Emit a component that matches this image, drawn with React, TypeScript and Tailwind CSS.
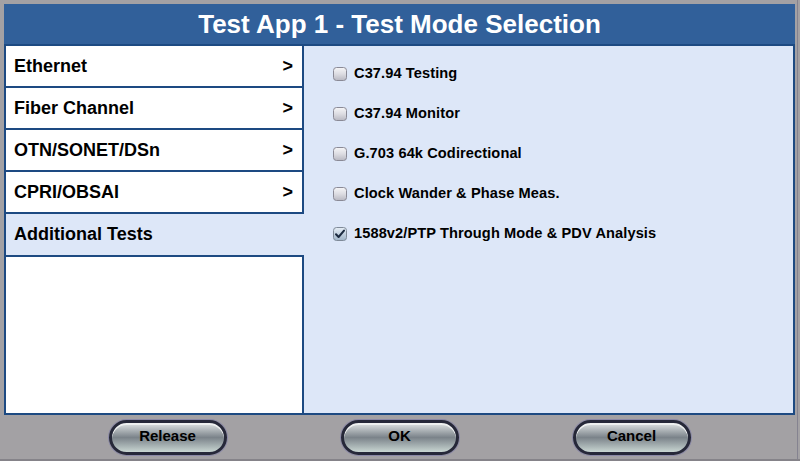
import * as React from 'react'

const categories = ['Ethernet', 'Fiber Channel', 'OTN/SONET/DSn', 'CPRI/OBSAI']

const tests = [
  { label: 'C37.94 Testing', checked: false },
  { label: 'C37.94 Monitor', checked: false },
  { label: 'G.703 64k Codirectional', checked: false },
  { label: 'Clock Wander & Phase Meas.', checked: false },
  { label: '1588v2/PTP Through Mode & PDV Analysis', checked: true },
]

function CheckBox({ checked }: { checked: boolean }) {
  if (checked) {
    return (
      <svg width="14" height="14" viewBox="0 0 14 14" className="shrink-0">
        <defs>
          <linearGradient id="cbOn" x1="0" y1="0" x2="0" y2="1">
            <stop offset="0" stopColor="#e6eef6" />
            <stop offset="1" stopColor="#9fb4c8" />
          </linearGradient>
        </defs>
        <rect x="0.5" y="0.5" width="13" height="13" rx="3" fill="url(#cbOn)" stroke="#7f8a98" />
        <path d="M3 7.2 L5.6 10 L11 3.6" fill="none" stroke="#1b2a40" strokeWidth="2" strokeLinecap="round" strokeLinejoin="round" />
      </svg>
    )
  }
  return (
    <svg width="14" height="14" viewBox="0 0 14 14" className="shrink-0">
      <defs>
        <linearGradient id="cbOff" x1="0" y1="0" x2="0" y2="1">
          <stop offset="0" stopColor="#f6f6f8" />
          <stop offset="0.5" stopColor="#dcdce2" />
          <stop offset="1" stopColor="#b8b8c2" />
        </linearGradient>
      </defs>
      <rect x="0.5" y="0.5" width="13" height="13" rx="3" fill="url(#cbOff)" stroke="#8a8a96" />
    </svg>
  )
}

function PillButton({ label }: { label: string }) {
  return (
    <button className="h-[35px] w-[118px] rounded-full border-[3px] border-[#262839] bg-gradient-to-b from-[#e2e6e6] via-[#7b838a] to-[#c9d6d2] pb-[1px] text-[15px] font-bold text-black shadow-[0_0_0_1px_#8a88a6,inset_0_2px_0_#eef0f0]">
      {label}
    </button>
  )
}

export default function App() {
  return (
    <div
      className="flex h-[461px] w-[800px] flex-col bg-[#a3a1a4]"
      style={{ fontFamily: '"Liberation Sans", Arial, sans-serif' }}
    >
      <div className="flex flex-1">
        <div className="flex flex-1 flex-col pl-1 pt-1">
          <div className="flex h-[40px] items-center justify-center bg-[#31609a] text-[26px] font-bold text-white">
            Test App 1 - Test Mode Selection
          </div>
          <div className="flex h-[371px] border-2 border-[#1d4a82] bg-[#dde7f8]">
            <div className="flex w-[298px] flex-col">
              {categories.map((c) => (
                <div
                  key={c}
                  className="flex h-[42px] items-center justify-between border-b-2 border-r-2 border-[#1d4a82] bg-white pl-2 pr-[9px] text-[18px] font-bold text-black"
                >
                  <span>{c}</span>
                  <span>&gt;</span>
                </div>
              ))}
              <div className="flex h-[41px] items-center pl-2 text-[18px] font-bold text-black">
                Additional Tests
              </div>
              <div className="flex-1 border-r-2 border-t-2 border-[#1d4a82] bg-white" />
            </div>
            <div className="flex flex-1 flex-col gap-[26px] pl-[29px] pt-[21px]">
              {tests.map((t) => (
                <div key={t.label} className="flex h-[14px] items-center gap-[7px] text-[14.6px] font-bold tracking-[0.1px] text-black">
                  <CheckBox checked={t.checked} />
                  <span>{t.label}</span>
                </div>
              ))}
            </div>
          </div>
          <div className="flex flex-1 items-center justify-center gap-[114px]">
            <PillButton label="Release" />
            <PillButton label="OK" />
            <PillButton label="Cancel" />
          </div>
        </div>
        <div className="flex w-[5px]">
          <div className="w-[2px]" />
          <div className="w-[1px] bg-[#858390]" />
        </div>
      </div>
      <div className="h-[2px] bg-[#858389]" />
    </div>
  )
}
